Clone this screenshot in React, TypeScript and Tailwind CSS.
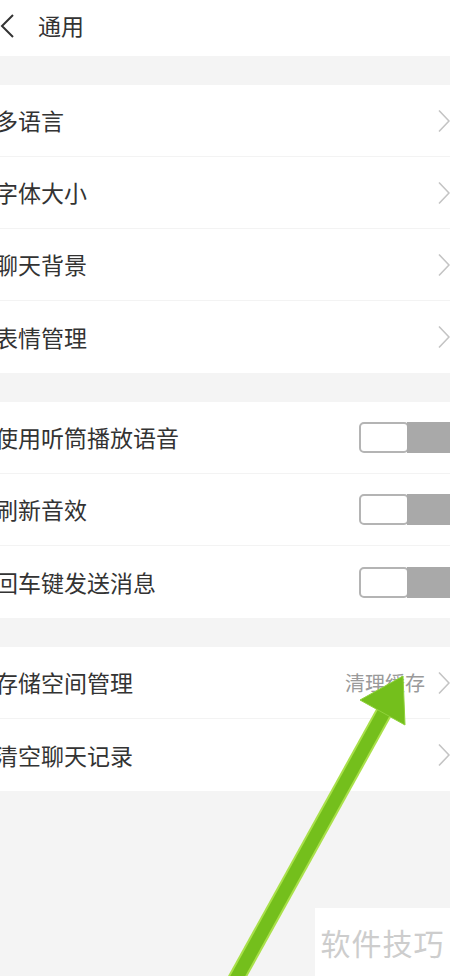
import React from "react";

const font = { fontFamily: '"Noto Sans CJK SC", "Noto Sans", sans-serif' };

function Chevron() {
  return (
    <svg width="14" height="24" viewBox="0 0 14 24" className="mr-[-1px] shrink-0">
      <path d="M2 1.5 L12 12 L2 22.5" fill="none" stroke="#c4c4c4" strokeWidth="1.6" />
    </svg>
  );
}

function Toggle() {
  return (
    <div className="flex h-[31px] w-[91px] shrink-0">
      <div className="h-full w-[50px] rounded-[5px] border-2 border-[#b4b4b4] bg-white" />
      <div className="-ml-[2px] h-full flex-1 bg-[#a9a9a9]" />
    </div>
  );
}

function Row({ label, right, last }: { label: string; right: React.ReactNode; last?: boolean }) {
  return (
    <div className={`flex h-[72px] items-center justify-between ${last ? "" : "border-b border-[#f3f3f3]"}`}>
      <span className="-ml-[5px] text-[23px] text-[#333333]">{label}</span>
      {right}
    </div>
  );
}

export default function App() {
  return (
    <div className="relative h-[976px] w-[450px] overflow-hidden bg-[#f4f4f4]" style={font}>
      <div className="flex h-[56px] items-center bg-white">
        <svg width="18" height="26" viewBox="0 0 18 26" className="ml-[-2px] mt-[-4px]">
          <path d="M15 2 L4 13 L15 24" fill="none" stroke="#333" strokeWidth="2" />
        </svg>
        <span className="ml-[22px] mt-[-6px] text-[23px] text-[#333333]">通用</span>
      </div>

      <div className="mt-[29px] bg-white">
        <Row label="多语言" right={<Chevron />} />
        <Row label="字体大小" right={<Chevron />} />
        <Row label="聊天背景" right={<Chevron />} />
        <Row label="表情管理" right={<Chevron />} last />
      </div>

      <div className="mt-[29px] bg-white">
        <Row label="使用听筒播放语音" right={<Toggle />} />
        <Row label="刷新音效" right={<Toggle />} />
        <Row label="回车键发送消息" right={<Toggle />} last />
      </div>

      <div className="mt-[29px] bg-white">
        <Row
          label="存储空间管理"
          right={
            <div className="flex items-center gap-[12px]">
              <span className="text-[20px] text-[#9a9a9a]">清理缓存</span>
              <Chevron />
            </div>
          }
        />
        <Row label="清空聊天记录" right={<Chevron />} last />
      </div>

      <div className="absolute bottom-0 right-0 flex h-[68px] w-[135px] items-center justify-center bg-white">
        <span className="text-[30px] tracking-[1px] text-[#cdcdcd]">软件技巧</span>
      </div>

      <svg className="pointer-events-none absolute left-0 top-0" width="450" height="976" viewBox="0 0 450 976">
        <line x1="230" y1="990" x2="388" y2="705" stroke="#a9e04a" strokeWidth="17" />
        <line x1="230" y1="990" x2="388" y2="705" stroke="#74bf1c" strokeWidth="13" />
        <polygon points="403,676 360,700 405,725" fill="#74bf1c" stroke="#8fd23a" strokeWidth="1" />
      </svg>
    </div>
  );
}
